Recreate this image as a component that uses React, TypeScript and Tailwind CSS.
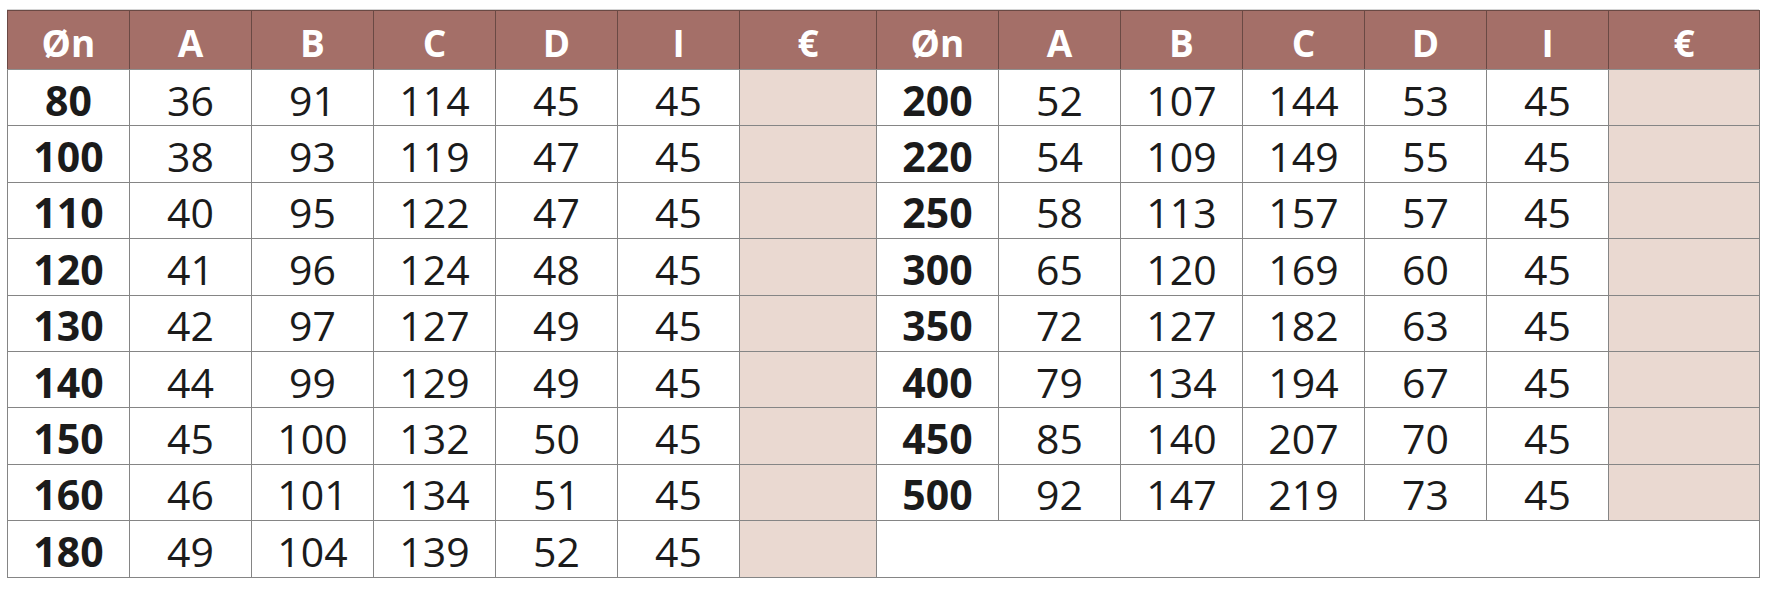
const left: number[][] = [
  [80, 36, 91, 114, 45, 45],
  [100, 38, 93, 119, 47, 45],
  [110, 40, 95, 122, 47, 45],
  [120, 41, 96, 124, 48, 45],
  [130, 42, 97, 127, 49, 45],
  [140, 44, 99, 129, 49, 45],
  [150, 45, 100, 132, 50, 45],
  [160, 46, 101, 134, 51, 45],
  [180, 49, 104, 139, 52, 45],
];

const right: number[][] = [
  [200, 52, 107, 144, 53, 45],
  [220, 54, 109, 149, 55, 45],
  [250, 58, 113, 157, 57, 45],
  [300, 65, 120, 169, 60, 45],
  [350, 72, 127, 182, 63, 45],
  [400, 79, 134, 194, 67, 45],
  [450, 85, 140, 207, 70, 45],
  [500, 92, 147, 219, 73, 45],
];

const heads = ['Øn', 'A', 'B', 'C', 'D', 'I', '€'];

function Cells({ row }: { row: number[] }) {
  return (
    <>
      {row.map((v, i) => (
        <td
          key={i}
          className={`h-[56.4px] border border-[#858585] pt-[5px] text-center leading-none text-[#1b1b1b] text-[41px] ${
            i === 0 ? 'font-bold' : 'font-normal'
          }`}
        >
          {v}
        </td>
      ))}
      <td className="h-[56.4px] border border-[#858585] bg-[#ead9d1]" />
    </>
  );
}

export default function App() {
  return (
    <div className="min-h-screen bg-white pl-[7px] pt-[9px]" style={{ fontFamily: '"Open Sans", sans-serif' }}>
      <div className="w-[1752px] border-t border-[#d4d4d4]">
        <table className="w-[1752px] table-fixed border-collapse">
          <colgroup>
            {[0, 1, 2, 3, 4, 5].map((i) => (
              <col key={'l' + i} className="w-[122px]" />
            ))}
            <col className="w-[137px]" />
            {[0, 1, 2, 3, 4, 5].map((i) => (
              <col key={'r' + i} className="w-[122px]" />
            ))}
            <col className="w-[151px]" />
          </colgroup>
          <thead>
            <tr>
              {[...heads, ...heads].map((h, i) => (
                <th
                  key={i}
                  className="h-[59px] border border-[#6a4944] border-b-[#8f8f8f] bg-[#a46f68] pt-[4px] text-center text-[37px] font-bold leading-none text-white"
                >
                  {h}
                </th>
              ))}
            </tr>
          </thead>
          <tbody>
            {left.map((row, r) => (
              <tr key={r}>
                <Cells row={row} />
                {right[r] ? (
                  <Cells row={right[r]} />
                ) : (
                  <td colSpan={7} className="h-[56.4px] border border-[#858585]" />
                )}
              </tr>
            ))}
          </tbody>
        </table>
      </div>
    </div>
  );
}
